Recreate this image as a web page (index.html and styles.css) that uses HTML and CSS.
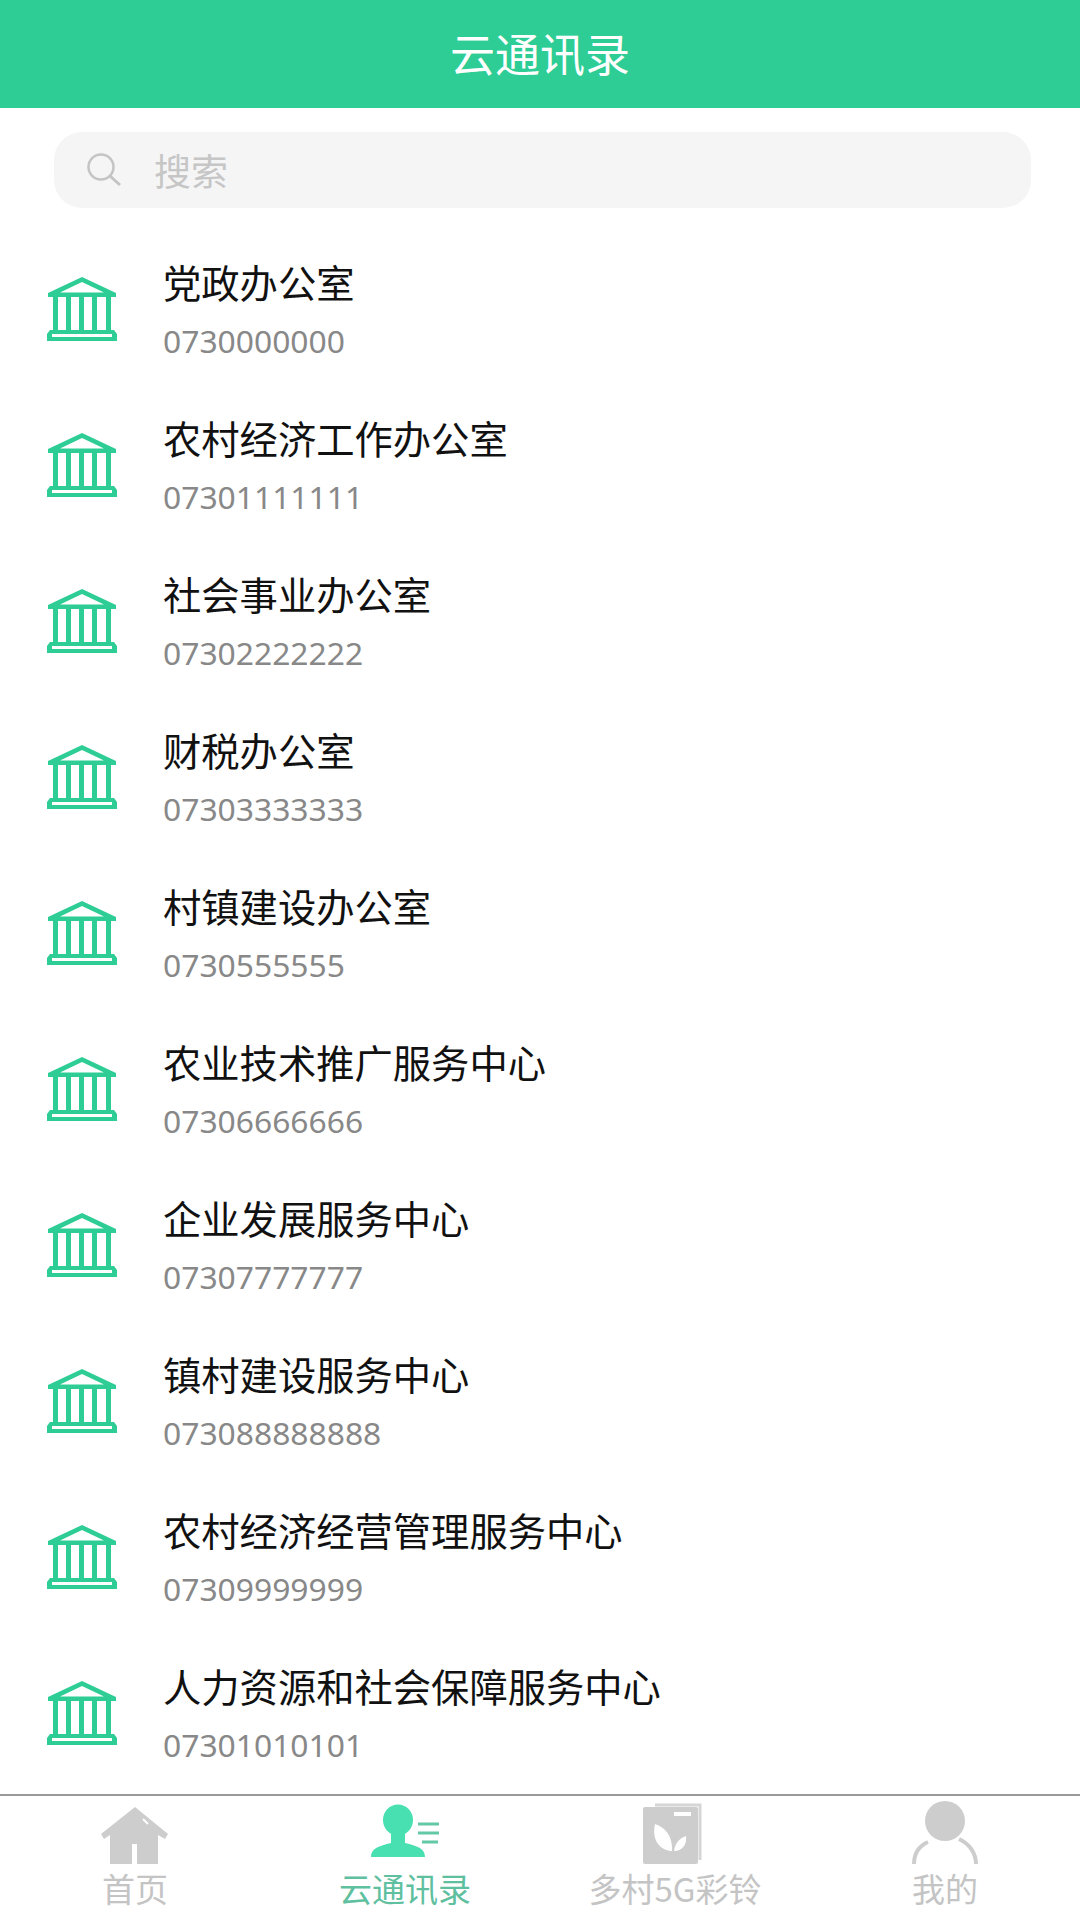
FILE: index.html
```html
<!DOCTYPE html>
<html lang="zh-CN">
<head>
    <meta charset="UTF-8">
    <title>云通讯录</title>
    <link rel="stylesheet" href="styles.css">
</head>
<body>

<svg class="defs" width="0" height="0">
    <symbol id="org" viewBox="0 0 72 64">
        <path d="M36 0 L70 16 V20 H2 V16 Z M36 5 L14 15.500 H58 Z" fill="#2dcd95" fill-rule="evenodd"/>
        <path d="M7 20h5v34H7z M20 20h5v34h-5z M33 20h5v34h-5z M46 20h5v34h-5z M60 20h5v34h-5z" fill="#2dcd95"/>
        <path d="M4 53 H68 L71 57 V64 H1 V57 Z M6 57 V60 H66 V57 Z" fill="#2dcd95" fill-rule="evenodd"/>
    </symbol>
</svg>

<div class="page">
    <header class="topbar">云通讯录</header>

    <div class="search">
        <svg class="search-icon" viewBox="0 0 36 36">
            <circle cx="15" cy="15" r="12.500" fill="none" stroke="#c4c4c4" stroke-width="2.500"/>
            <path d="M24 24 L34 33" stroke="#c4c4c4" stroke-width="3" fill="none"/>
        </svg>
        <span class="search-text">搜索</span>
    </div>

    <ul class="contacts">
        <li class="contact">
            <svg class="contact-icon"><use href="#org"/></svg>
            <div><div class="contact-name">党政办公室</div><div class="contact-tel">0730000000</div></div>
        </li>
        <li class="contact">
            <svg class="contact-icon"><use href="#org"/></svg>
            <div><div class="contact-name">农村经济工作办公室</div><div class="contact-tel">07301111111</div></div>
        </li>
        <li class="contact">
            <svg class="contact-icon"><use href="#org"/></svg>
            <div><div class="contact-name">社会事业办公室</div><div class="contact-tel">07302222222</div></div>
        </li>
        <li class="contact">
            <svg class="contact-icon"><use href="#org"/></svg>
            <div><div class="contact-name">财税办公室</div><div class="contact-tel">07303333333</div></div>
        </li>
        <li class="contact">
            <svg class="contact-icon"><use href="#org"/></svg>
            <div><div class="contact-name">村镇建设办公室</div><div class="contact-tel">0730555555</div></div>
        </li>
        <li class="contact">
            <svg class="contact-icon"><use href="#org"/></svg>
            <div><div class="contact-name">农业技术推广服务中心</div><div class="contact-tel">07306666666</div></div>
        </li>
        <li class="contact">
            <svg class="contact-icon"><use href="#org"/></svg>
            <div><div class="contact-name">企业发展服务中心</div><div class="contact-tel">07307777777</div></div>
        </li>
        <li class="contact">
            <svg class="contact-icon"><use href="#org"/></svg>
            <div><div class="contact-name">镇村建设服务中心</div><div class="contact-tel">073088888888</div></div>
        </li>
        <li class="contact">
            <svg class="contact-icon"><use href="#org"/></svg>
            <div><div class="contact-name">农村经济经营管理服务中心</div><div class="contact-tel">07309999999</div></div>
        </li>
        <li class="contact">
            <svg class="contact-icon"><use href="#org"/></svg>
            <div><div class="contact-name">人力资源和社会保障服务中心</div><div class="contact-tel">07301010101</div></div>
        </li>
    </ul>

    <nav class="tabbar">
        <div class="tab">
            <svg class="tab-icon" viewBox="0 0 72 64">
                <path d="M36 3 L69 30 L66 35 L59 31 V60 H38 V40 H33 V60 H11 V31 L5 35 L2 30 Z" fill="#cdcdcd"/>
                <path d="M44 15 L49 20" stroke="#fff" stroke-width="2"/>
            </svg>
            <span>首页</span>
        </div>
        <div class="tab tab-active">
            <svg class="tab-icon" viewBox="0 0 72 64">
                <ellipse cx="29" cy="16" rx="15" ry="15.500" fill="#48dfb1"/>
                <path d="M2 53 C2 44 10 42 22 39 V28 H36 V39 C48 42 56 44 56 53 Z" fill="#48dfb1"/>
                <path d="M49 20h21M49 29h21M53 38h16" stroke="#62c8a6" stroke-width="3"/>
            </svg>
            <span>云通讯录</span>
        </div>
        <div class="tab">
            <svg class="tab-icon" viewBox="0 0 72 64">
                <path d="M16 1 H61 V56" fill="none" stroke="#d6d6d6" stroke-width="3"/>
                <rect x="4" y="3" width="55" height="57" rx="2" fill="#cdcdcd"/>
                <path d="M35 8h17v4H35z" fill="#fff"/>
                <path d="M16 20 C26 23 34 32 33 47 C23 47 12 38 16 20 Z M35 47 C36 39 41 34 47 32 C48 40 44 47 35 47 Z" fill="#fff"/>
            </svg>
            <span>多村5G彩铃</span>
        </div>
        <div class="tab">
            <svg class="tab-icon" viewBox="0 0 72 64">
                <circle cx="36" cy="17" r="20" fill="#cdcdcd"/>
                <path d="M5 60 C5 50 10 42 19 38 M50 35 C61 40 67 50 67 60" fill="none" stroke="#cdcdcd" stroke-width="4"/>
            </svg>
            <span>我的</span>
        </div>
    </nav>
</div>

</body>
</html>
```

FILE: styles.css
```css
* { box-sizing: border-box; }
body {
    margin: 0;
    background: #fff;
    font-family: "Noto Sans CJK SC", "Noto Sans", sans-serif;
}
.defs { display: block; height: 0; }
.page {
    display: flex;
    flex-direction: column;
    height: 1920px;
    overflow: hidden;
}
.topbar {
    height: 108px;
    flex: none;
    display: flex;
    align-items: center;
    justify-content: center;
    padding-bottom: 4px;
    background: #2dcd95;
    color: #fff;
    font-size: 45px;
}
.search {
    flex: none;
    display: flex;
    align-items: center;
    height: 76px;
    margin: 24px 49px 0 54px;
    padding-left: 32px;
    border-radius: 28px;
    background: #f5f5f6;
}
.search-icon { width: 36px; height: 36px; margin-right: 32px; }
.search-text { font-size: 37px; color: #c6c6c6; }
.contacts {
    flex: 1;
    margin: 0;
    padding: 23px 0 0;
    list-style: none;
}
.contact {
    display: flex;
    align-items: center;
    height: 156px;
    padding-left: 46px;
}
.contact-icon { width: 72px; height: 64px; margin-right: 45px; flex: none; }
.contact-name { font-size: 38.300px; line-height: 50px; color: #111; }
.contact-tel {
    margin-top: 14px;
    font-family: "Noto Sans", sans-serif;
    font-size: 31.800px;
    line-height: 40px;
    color: #888;
}
.tabbar {
    flex: none;
    display: grid;
    grid-template-columns: repeat(4, 1fr);
    height: 126px;
    border-top: 2px solid #999;
}
.tab {
    display: flex;
    flex-direction: column;
    align-items: center;
    padding-top: 8px;
    font-size: 33px;
    line-height: 40px;
    color: #c4c4c4;
}
.tab-icon { width: 72px; height: 64px; overflow: visible; }
.tab-active { color: #5fc09f; }
```
